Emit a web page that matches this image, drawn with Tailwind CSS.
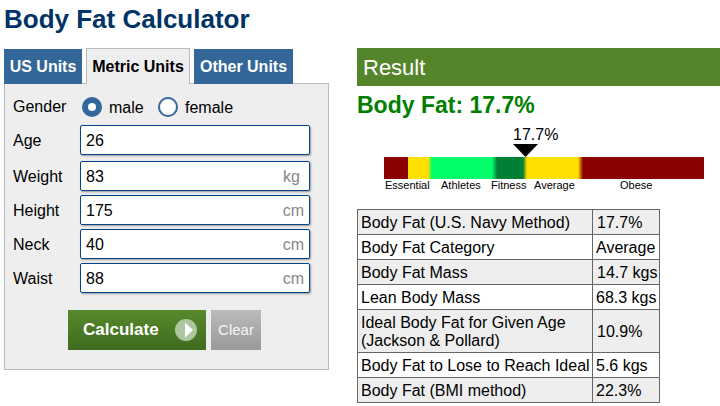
<!DOCTYPE html>
<html lang="en">
<head>
  <meta charset="UTF-8" />
  <title>Body Fat Calculator</title>
  <script src="https://cdn.jsdelivr.net/npm/@tailwindcss/browser@4"></script>
</head>
<body class="bg-white text-black font-['Liberation_Sans',Arial,sans-serif] text-[16px] overflow-hidden">
  <div class="w-[720px] h-[406px] overflow-hidden">
    <!-- Title -->
    <h1 class="h-[48px] pl-[4px] pt-[3px] text-[26px] leading-[32px] font-bold text-[#003366]">Body Fat Calculator</h1>

    <div class="flex items-start pl-1">
      <!-- Left: form -->
      <div class="w-[325px]">
        <div class="flex h-[36px] gap-1 text-[16px] font-bold leading-[36px]">
          <div class="w-[78px] h-[35px] mt-[1px] bg-[#336699] text-white text-center">US Units</div>
          <div class="relative z-10 w-[104px] h-[36px] bg-[#eeeeee] border border-b-0 border-[#bbbbbb] text-center">Metric Units</div>
          <div class="w-[99px] h-[35px] mt-[1px] bg-[#336699] text-white text-center">Other Units</div>
        </div>
        <div class="h-[287px] -mt-px bg-[#eeeeee] border border-[#bbbbbb] pl-2 pt-[13px]">
          <div class="flex items-center h-[20px] mb-[8px]">
            <span class="w-[69px]">Gender</span>
            <span class="w-[20px] h-[20px] rounded-full bg-[#336699] flex items-center justify-center"><span class="w-[8px] h-[8px] rounded-full bg-white"></span></span>
            <span class="ml-[7px] w-[49px] pt-px">male</span>
            <span class="w-[20px] h-[20px] rounded-full bg-white border-2 border-[#336699]"></span>
            <span class="ml-[7px] pt-px">female</span>
          </div>
          <div class="flex items-center h-[30px] mb-[6px]">
            <span class="w-[67px] pt-[2px]">Age</span>
            <div class="w-[230px] h-[30px] px-[5px] pt-[2px] flex items-center bg-white border border-[#044587] rounded-[2px] shadow-[1px_1px_2px_#999]">26</div>
          </div>
          <div class="flex items-center h-[30px] mb-1">
            <span class="w-[67px] pt-[2px]">Weight</span>
            <div class="w-[230px] h-[30px] px-[5px] pt-[2px] flex items-center justify-between bg-white border border-[#044587] rounded-[2px] shadow-[1px_1px_2px_#999]">83<span class="text-[#888888] mr-[4px]">kg</span></div>
          </div>
          <div class="flex items-center h-[30px] mb-1">
            <span class="w-[67px] pt-[2px]">Height</span>
            <div class="w-[230px] h-[30px] px-[5px] pt-[2px] flex items-center justify-between bg-white border border-[#044587] rounded-[2px] shadow-[1px_1px_2px_#999]">175<span class="text-[#888888]">cm</span></div>
          </div>
          <div class="flex items-center h-[30px] mb-1">
            <span class="w-[67px] pt-[2px]">Neck</span>
            <div class="w-[230px] h-[30px] px-[5px] pt-[2px] flex items-center justify-between bg-white border border-[#044587] rounded-[2px] shadow-[1px_1px_2px_#999]">40<span class="text-[#888888]">cm</span></div>
          </div>
          <div class="flex items-center h-[30px]">
            <span class="w-[67px] pt-[2px]">Waist</span>
            <div class="w-[230px] h-[30px] px-[5px] pt-[2px] flex items-center justify-between bg-white border border-[#044587] rounded-[2px] shadow-[1px_1px_2px_#999]">88<span class="text-[#888888]">cm</span></div>
          </div>
          <div class="flex gap-[5px] mt-[17px] ml-[55px]">
            <div class="w-[138px] h-[40px] pl-[15px] pr-[9px] flex items-center justify-between bg-gradient-to-b from-[#578a2b] to-[#3f6b1f] text-white text-[17px] font-bold">
              Calculate
              <svg width="22" height="22" viewBox="0 0 22 22"><circle cx="11" cy="11" r="11" fill="#aec6a0"/><path d="M10 3.5 L18 11 L10 18.5 Z" fill="#ffffff"/></svg>
            </div>
            <div class="w-[50px] h-[40px] pt-px flex items-center justify-center bg-gradient-to-b from-[#bbbbbb] to-[#999999] text-[#f6f6f6] text-[15px]">Clear</div>
          </div>
        </div>
      </div>

      <!-- Right: result -->
      <div class="ml-[28px] flex-1">
        <div class="h-[38px] pl-[6px] pt-px bg-[#55852b] text-white text-[22px] leading-[38px]">Result</div>
        <div class="mt-[5px] h-[28px] text-[23px] leading-[28px] font-bold text-[#008000]">Body Fat: 17.7%</div>

        <!-- Scale -->
        <div class="relative mt-[15px] ml-[27px] w-[320px] pt-[23px]">
          <span class="absolute left-[129px] -top-[8px] leading-[18px]">17.7%</span>
          <svg class="absolute left-[129px] top-[10px]" width="25" height="13" viewBox="0 0 25 13"><path d="M0 0H25L12.5 13Z" fill="#000000"/></svg>
          <div class="h-[22px] bg-[linear-gradient(to_right,#8b0000_24px,#ffe000_24px,#ffe000_44px,#00ff6a_48px,#00ff6a_108px,#008037_113px,#008037_139px,#ffe000_143px,#ffe000_194px,#8b0000_199px)]"></div>
          <div class="flex text-[11px] leading-[13px] whitespace-nowrap">
            <span class="ml-[1px] w-[56px]">Essential</span>
            <span class="w-[50px]">Athletes</span>
            <span class="w-[43px]">Fitness</span>
            <span class="w-[86px]">Average</span>
            <span>Obese</span>
          </div>
        </div>

        <!-- Table -->
        <table class="mt-[17px] w-[303px] table-fixed border-collapse text-[16px] leading-[18px] [&_td]:pt-px">
          <tbody>
            <tr class="h-[25px] bg-[#eeeeee]"><td class="w-[235px] border border-[#666666] px-[3px] whitespace-nowrap">Body Fat (U.S. Navy Method)</td><td class="border border-[#666666] px-[4px] whitespace-nowrap">17.7%</td></tr>
            <tr class="h-[25px]"><td class="border border-[#666666] px-[3px]">Body Fat Category</td><td class="border border-[#666666] px-[3px] whitespace-nowrap">Average</td></tr>
            <tr class="h-[25px] bg-[#eeeeee]"><td class="border border-[#666666] px-[3px]">Body Fat Mass</td><td class="border border-[#666666] px-[4px] whitespace-nowrap">14.7 kgs</td></tr>
            <tr class="h-[25px]"><td class="border border-[#666666] px-[3px]">Lean Body Mass</td><td class="border border-[#666666] px-[3px] whitespace-nowrap">68.3 kgs</td></tr>
            <tr class="h-[43px] bg-[#eeeeee]"><td class="border border-[#666666] px-[3px]">Ideal Body Fat for Given Age<br />(Jackson &amp; Pollard)</td><td class="border border-[#666666] px-[4px] whitespace-nowrap">10.9%</td></tr>
            <tr class="h-[25px]"><td class="border border-[#666666] px-[3px] whitespace-nowrap">Body Fat to Lose to Reach Ideal</td><td class="border border-[#666666] px-[3px] whitespace-nowrap">5.6 kgs</td></tr>
            <tr class="h-[25px] bg-[#eeeeee]"><td class="border border-[#666666] px-[3px]">Body Fat (BMI method)</td><td class="border border-[#666666] px-[3px] whitespace-nowrap">22.3%</td></tr>
          </tbody>
        </table>
      </div>
    </div>
  </div>
</body>
</html>
